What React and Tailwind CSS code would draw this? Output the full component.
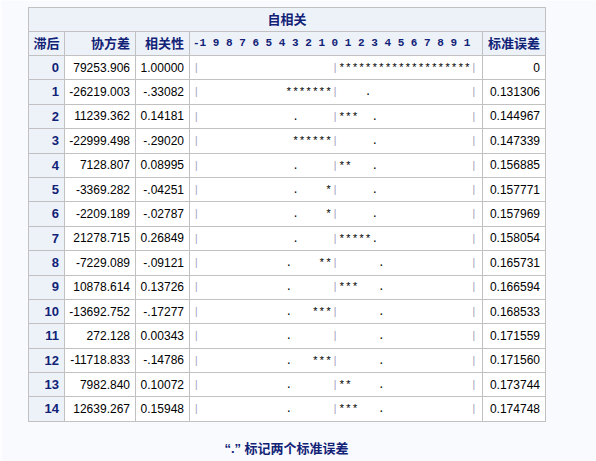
const rows = [
  [0, '79253.906', '1.00000', 1.0, 0],
  [1, '-26219.003', '-.33082', -0.33082, 0.131306],
  [2, '11239.362', '0.14181', 0.14181, 0.144967],
  [3, '-22999.498', '-.29020', -0.2902, 0.147339],
  [4, '7128.807', '0.08995', 0.08995, 0.156885],
  [5, '-3369.282', '-.04251', -0.04251, 0.157771],
  [6, '-2209.189', '-.02787', -0.02787, 0.157969],
  [7, '21278.715', '0.26849', 0.26849, 0.158054],
  [8, '-7229.089', '-.09121', -0.09121, 0.165731],
  [9, '10878.614', '0.13726', 0.13726, 0.166594],
  [10, '-13692.752', '-.17277', -0.17277, 0.168533],
  [11, '272.128', '0.00343', 0.00343, 0.171559],
  [12, '-11718.833', '-.14786', -0.14786, 0.17156],
  [13, '7982.840', '0.10072', 0.10072, 0.173744],
  [14, '12639.267', '0.15948', 0.15948, 0.174748],
];

const seText = ['0', '0.131306', '0.144967', '0.147339', '0.156885', '0.157771', '0.157969', '0.158054', '0.165731', '0.166594', '0.168533', '0.171559', '0.171560', '0.173744', '0.174748'];

// 43 character plot line: | 20 neg | 20 pos |
function plotLine(r, se) {
  const chars = Array(43).fill(' ');
  chars[0] = '|';
  chars[21] = '|';
  chars[42] = '|';
  if (se > 0) {
    const d = Math.round(se * 40);
    chars[21 - d] = '.';
    chars[21 + d] = '.';
  }
  const n = Math.round(Math.abs(r) * 20);
  for (let i = 1; i <= n; i++) {
    chars[r < 0 ? 21 - i : 21 + i] = '*';
  }
  return chars;
}

const cjk = { fontFamily: '"Liberation Sans", "Noto Sans CJK SC", sans-serif' };
const mono = { fontFamily: '"Liberation Mono", monospace' };

function Plot({ r, se }) {
  return (
    <span className="whitespace-pre" style={mono}>
      {plotLine(r, se).map((c, i) =>
        c === '|' ? <span key={i} className="text-[#a3a3bd]">|</span> : c
      )}
    </span>
  );
}

export default function App() {
  return (
    <div className="w-[596px] h-[461px] bg-[#f9fafd] border-l-2 border-t border-[#fdfdff] overflow-hidden" style={cjk}>
      <div className="pl-[26px] pt-[6px]">
        <table className="border-collapse border border-[#c1c1c1] text-[12px] text-black">
          <thead>
            <tr className="h-[24px] bg-[#edf2f9]">
              <th colSpan={5} className="border border-[#c1c1c1] text-[13px] font-bold text-[#112277] text-center">自相关</th>
            </tr>
            <tr className="h-[24px] bg-[#edf2f9] text-[13px] font-bold text-[#112277]">
              <th className="w-[36px] border border-[#c1c1c1] text-center">滞后</th>
              <th className="w-[71px] border border-[#c1c1c1] text-right pr-[5px]">协方差</th>
              <th className="w-[54px] border border-[#c1c1c1] text-right pr-[5px]">相关性</th>
              <th className="w-[293px] border border-[#c1c1c1] text-left pl-[3px] text-[11px] whitespace-pre" style={mono}>-1 9 8 7 6 5 4 3 2 1 0 1 2 3 4 5 6 7 8 9 1</th>
              <th className="w-[63px] border border-[#c1c1c1] text-right pr-[5px]">标准误差</th>
            </tr>
          </thead>
          <tbody>
            {rows.map(([lag, cov, cor, r, se], i) => (
              <tr key={lag} className="h-[24.4px]">
                <th className="bg-[#edf2f9] border border-[#c1c1c1] text-right pr-[5px] text-[13px] font-bold text-[#112277]">{lag}</th>
                <td className="bg-white border border-[#c1c1c1] text-right pr-[5px]">{cov}</td>
                <td className="bg-white border border-[#c1c1c1] text-right pr-[5px]">{cor}</td>
                <td className="bg-white border border-[#c1c1c1] text-left pl-[3px] text-[11px]"><Plot r={r} se={se} /></td>
                <td className="bg-white border border-[#c1c1c1] text-right pr-[5px]">{seText[i]}</td>
              </tr>
            ))}
          </tbody>
        </table>
        <div className="w-[517px] mt-[17px] text-center text-[13px] font-bold text-[#112277]">“.” 标记两个标准误差</div>
      </div>
    </div>
  );
}
